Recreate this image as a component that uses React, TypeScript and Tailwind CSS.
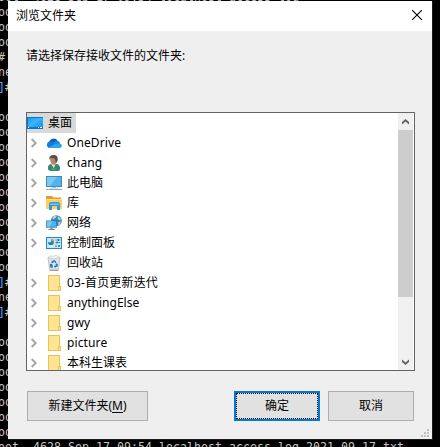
import React from "react";

const TERMINAL_LINES = [
  "oo", "oo", "oo", "# ", "ne", "]#", "", "oo", "oo", "oo", "oo", "oo", "oo", "oo", "oo", "oo", "oo", "oo",
  "]#", "ne", "]#", "", "oo", "oo", "oo", "oo", "oo", "oo", "oo",
];

function DesktopIcon() {
  return (
    <svg width="16" height="16" viewBox="0 0 16 16" shapeRendering="crispEdges">
      <defs>
        <linearGradient id="desk" x1="0" y1="0" x2="1" y2="0.8">
          <stop offset="0" stopColor="#149cf0" />
          <stop offset="0.5" stopColor="#3fb3fa" />
          <stop offset="1" stopColor="#149cf0" />
        </linearGradient>
      </defs>
      <rect x="0" y="2" width="16" height="12" fill="#0878c8" />
      <rect x="0.5" y="3" width="15" height="9" fill="url(#desk)" />
      <path d="M1 12h1v1H1zM11 12h1v1h-1zM13 12h2v1h-2z" fill="#fff" />
    </svg>
  );
}

function CloudIcon() {
  return (
    <svg width="16" height="16" viewBox="0 0 16 16">
      <path d="M3.2 7.1A4.6 4.6 0 0 1 11.7 6l-4.5 5H1z" fill="#0864b8" />
      <path d="M3.7 13A3.3 3.3 0 0 1 3.8 6.5c1.3 0 2 .5 3.2 1.2L11 10z" fill="#1379d4" />
      <path d="M7 7.7c1.4-1.3 3-2.1 4.7-1.7 1.5.3 2.2 1.4 2.5 2.6L11 11z" fill="#168bdd" />
      <path d="M2 12.5 9.2 9l4.5-.6A2.3 2.3 0 0 1 13.5 13H3.7c-.7 0-1.3-.2-1.7-.5z" fill="#28a8ea" />
    </svg>
  );
}

function UserIcon() {
  return (
    <svg width="16" height="16" viewBox="0 0 16 16">
      <path d="M2 14.5v-2.2c0-1.6 1-2.6 3-3.3l5-.2c2.6.6 4 1.8 4 4V15l-1.5 1H4z" fill="#358a68" />
      <path d="m5.2 9 2.6 4.2L9.6 9z" fill="#d9e4e0" />
      <path d="M4.2 2.2h6v4.6c0 1.8-.8 3-2.4 3S4.6 8.3 4.4 6.5z" fill="#b9886c" />
      <path d="M3.3 4.3C3 1.7 4.5 0 7.4 0c3.2 0 4.8 1.8 4.3 4.8-.2 1.5-.8 2.7-1.8 3.2L9.2 5l-1-1.8-3.8-.3-.3 1.6z" fill="#57504a" />
      <path d="M5.5 13.6h4v1h-4z" fill="#69a98e" />
    </svg>
  );
}

function ComputerIcon() {
  return (
    <svg width="16" height="16" viewBox="0 0 16 16">
      <path d="M0 1h16v11H0z" fill="#4a87a8" />
      <path d="M1 2h14v9H1z" fill="#4db5f2" />
      <path d="M1 2h10L4 11H1z" fill="#a1ddfa" opacity=".5" />
      <path d="M6 12h4v1H6z" fill="#b9c6cd" />
      <path d="M0 14h16v1H0z" fill="#8fb0c2" />
      <path d="M4 13h8v1H4z" fill="#d5dee3" />
    </svg>
  );
}

function LibraryIcon() {
  return (
    <svg width="16" height="16" viewBox="0 0 16 16">
      <path d="M0 1h6l1.5 1.5H15V6H0z" fill="#e0a030" />
      <path d="M0 4h16v10H0z" fill="#ffcf5e" />
      <path d="M0 4h16v1H0z" fill="#ffe08c" />
      <path d="M3 15V8.5L4.5 7h8L14 8.5V15h-3v-4H6v4z" fill="#3597df" />
      <path d="M4.5 8.5h8L13 10H4z" fill="#7cc4f5" />
    </svg>
  );
}

function NetworkIcon() {
  return (
    <svg width="16" height="16" viewBox="0 0 16 16">
      <circle cx="10.4" cy="5.6" r="5.4" fill="#3a7fae" />
      <path d="M6.2 3C7.5 1.2 9.5.4 11.2.6L10 2.8 7.2 4.6zM12 1.2l3 2.5-1 1.8-2.5-1.5zM12.2 7.2l2.8-1-1 3-1.8 1z" fill="#a5d6e8" />
      <path d="M0 5.5h10.8v7.2H0z" fill="#3583ae" />
      <path d="M.8 6.3H10v5.5H.8z" fill="#45b6ef" />
      <path d="M.8 6.3h6L3.4 11.8H.8z" fill="#8fdcfa" opacity=".6" />
      <path d="M4.5 12.7h2.2v1.2h2.1V15H2.4v-1.1h2.1z" fill="#6e8b9c" />
    </svg>
  );
}

function ControlPanelIcon() {
  return (
    <svg width="16" height="16" viewBox="0 0 16 16">
      <path d="M0 2h16v12H0z" fill="#2688c4" />
      <path d="M1 3h14v10H1z" fill="#bfe8fb" />
      <path d="M2 7.2A2.9 2.9 0 1 0 5.2 4.3v2.9z" fill="#1c7db7" />
      <path d="M5.9 3.8A2.7 2.7 0 0 1 8.2 6.3H5.9z" fill="#f19722" />
      <path d="M9.5 4.5h4.8v1H9.5zM9.5 7h4.8v1H9.5z" fill="#4c91b5" />
      <path d="M12 4h1v2h-1zM10.5 6.5h1v2h-1z" fill="#12689e" />
      <path d="M3 11h4v1H3z" fill="#fff" />
      <path d="M9 10h2v2H9z" fill="#ed982a" />
      <path d="M12 10h2v2h-2z" fill="#438fb9" />
    </svg>
  );
}

function RecycleIcon() {
  return (
    <svg width="16" height="16" viewBox="0 0 16 16">
      <path d="m2 2.5 1.7 13h8.6l1.7-13z" fill="#dfe3e5" stroke="#a1a7aa" strokeWidth=".6" />
      <path d="m2 2.4 2-1.6 3 .7 2.8-1.2L14 2.5 8 4z" fill="#f6f8f8" stroke="#b4babd" strokeWidth=".6" />
      <path d="m5.1 8 .7-1.6 1.5-1.1 2 .1 1.2 2.2-1.5.3-.8-1.3L7 8zM4 9l2-.2.8 1.6-.7.8.7.1v1.5H4.5L3.8 11zm5.4-.1 1.7-.7 1 2-1 1.9H9.6v1L7.8 11.5l1.8-1.5v.8h.8z" fill="#2879b8" />
      <path d="M4 14.7h8v.9H4z" fill="#858a8d" />
    </svg>
  );
}

function FolderIcon() {
  return (
    <svg width="16" height="16" viewBox="0 0 16 16" shapeRendering="crispEdges">
      <path d="M2 0h12v16H2z" fill="#e8c254" />
      <path d="M3 1h10v14H3z" fill="#ffe591" />
      <path d="M12 11h3v5h-3z" fill="#e8c254" />
      <path d="M13 12h1v3h-1z" fill="#ffe591" />
    </svg>
  );
}

const ITEMS = [
  { label: "OneDrive", Icon: CloudIcon, cls: "tracking-[0.1px]" },
  { label: "chang", Icon: UserIcon, cls: "tracking-[0.1px]" },
  { label: "此电脑", Icon: ComputerIcon, cls: "" },
  { label: "库", Icon: LibraryIcon, cls: "" },
  { label: "网络", Icon: NetworkIcon, cls: "" },
  { label: "控制面板", Icon: ControlPanelIcon, cls: "" },
  { label: "回收站", Icon: RecycleIcon, cls: "", leaf: true },
  { label: "03-首页更新迭代", Icon: FolderIcon, cls: "tracking-[0.15px]" },
  { label: "anythingElse", Icon: FolderIcon, cls: "" },
  { label: "gwy", Icon: FolderIcon, cls: "tracking-[0.1px]" },
  { label: "picture", Icon: FolderIcon, cls: "tracking-[0.12px]" },
  { label: "本科生课表", Icon: FolderIcon, cls: "" },
];

function ScrollArrow({ down = false }: { down?: boolean }) {
  return (
    <svg width="7" height="6" viewBox="0 0 7 6" className={down ? "rotate-180" : ""}>
      <path d="M0 3 3.5 0 7 3v2.5L3.5 2.4 0 5.5z" fill="#606060" />
    </svg>
  );
}

export default function App() {
  return (
    <div className="relative h-[447px] w-[440px] overflow-hidden bg-black">
      <div className="-ml-[2px] -mt-[10px] whitespace-pre font-['DejaVu_Sans_Mono',monospace] text-[11.63px] leading-[15px] text-[#c4c4c4]">
        <div className="h-[15px]">{"oot  4628 Sep 17 09:54 localhost_access_log"}</div>
        {TERMINAL_LINES.map((line, i) => (
          <div key={i} className="h-[15px]">
            {line.startsWith("]") ? <><span className="text-[#5aa5f0]">]</span>{line.slice(1)}</> : line}
          </div>
        ))}
        <div className="h-[15px]">{"oot  4628 Sep 17 09:54 localhost_access_log.2021-09-17.txt"}</div>
      </div>

      <div className="absolute left-[8px] top-0 flex h-[440px] w-[425px] flex-col border-b border-r border-[#1b1b1b] bg-[#efefef] bg-clip-padding pt-px font-['Noto_Sans','Noto_Sans_CJK_SC',sans-serif] text-[12px] text-black [clip-path:inset(1px_0_0_0)]">
        <header className="flex h-[30px] shrink-0 items-center justify-between bg-white pl-[8px] pr-[10px]">
          <span className="leading-[20px]">浏览文件夹</span>
          <svg width="10" height="10" viewBox="0 0 10 10" className="-mt-[2px]">
            <path d="m0 0 10 10M10 0 0 10" stroke="#000" strokeWidth="1.1" />
          </svg>
        </header>
        <p className="mt-[15px] h-[20px] pl-[18px] leading-[20px]">请选择保存接收文件的文件夹:</p>

        <div className="ml-[18px] mt-[46px] flex h-[259px] w-[389px] shrink-0 border border-[#646464] bg-white pr-px">
          <div className="min-w-0 flex-1 overflow-hidden">
            <div className="flex h-[20px] w-[49px] items-center gap-[5px] bg-[#d9d9d9]">
              <DesktopIcon />
              <span className="whitespace-nowrap leading-[20px]">桌面</span>
            </div>
            {ITEMS.map(({ label, Icon, cls, leaf }) => (
              <div key={label} className="flex h-[20px] items-center">
                <div className="flex w-[19px] pl-[4px]">
                  {!leaf && (
                    <svg width="6" height="10" viewBox="0 0 6 10">
                      <path d="m.7 1 4 4-4 4" fill="none" stroke="#a6a6a6" strokeWidth="2" />
                    </svg>
                  )}
                </div>
                <Icon />
                <span className={`ml-[5px] whitespace-nowrap leading-[20px] ${cls}`}>{label}</span>
              </div>
            ))}
          </div>
          <div className="flex w-[15px] shrink-0 flex-col bg-[#f0f0f0]">
            <div className="flex h-[17px] items-center justify-center"><ScrollArrow /></div>
            <div className="h-[167px] bg-[#cdcdcd]" />
            <div className="flex-1" />
            <div className="flex h-[17px] items-center justify-center"><ScrollArrow down /></div>
          </div>
        </div>

        <div className="mt-[20px] flex h-[30px] shrink-0 pl-[19px]">
          <button className="h-[30px] w-[121px] border border-[#adadad] bg-[#e1e1e1]">
            新建文件夹(<span className="underline underline-offset-2">M</span>)
          </button>
          <button className="ml-[86px] h-[30px] w-[86px] border-2 border-[#0078d7] bg-[#e1e1e1]">
            <span className="flex h-[26px] items-center justify-center border border-dotted border-black">确定</span>
          </button>
          <button className="ml-[8px] h-[30px] w-[86px] border border-[#adadad] bg-[#e1e1e1]">取消</button>
        </div>
        <div className="mt-[8px] flex justify-end pr-[3px]">
          <svg width="8" height="8" viewBox="0 0 8 8" shapeRendering="crispEdges">
            <path d="M6 0h2v2H6zM3 3h2v2H3zM6 3h2v2H6zM0 6h2v2H0zM3 6h2v2H3zM6 6h2v2H6z" fill="#bfbfbf" />
          </svg>
        </div>
      </div>
    </div>
  );
}
